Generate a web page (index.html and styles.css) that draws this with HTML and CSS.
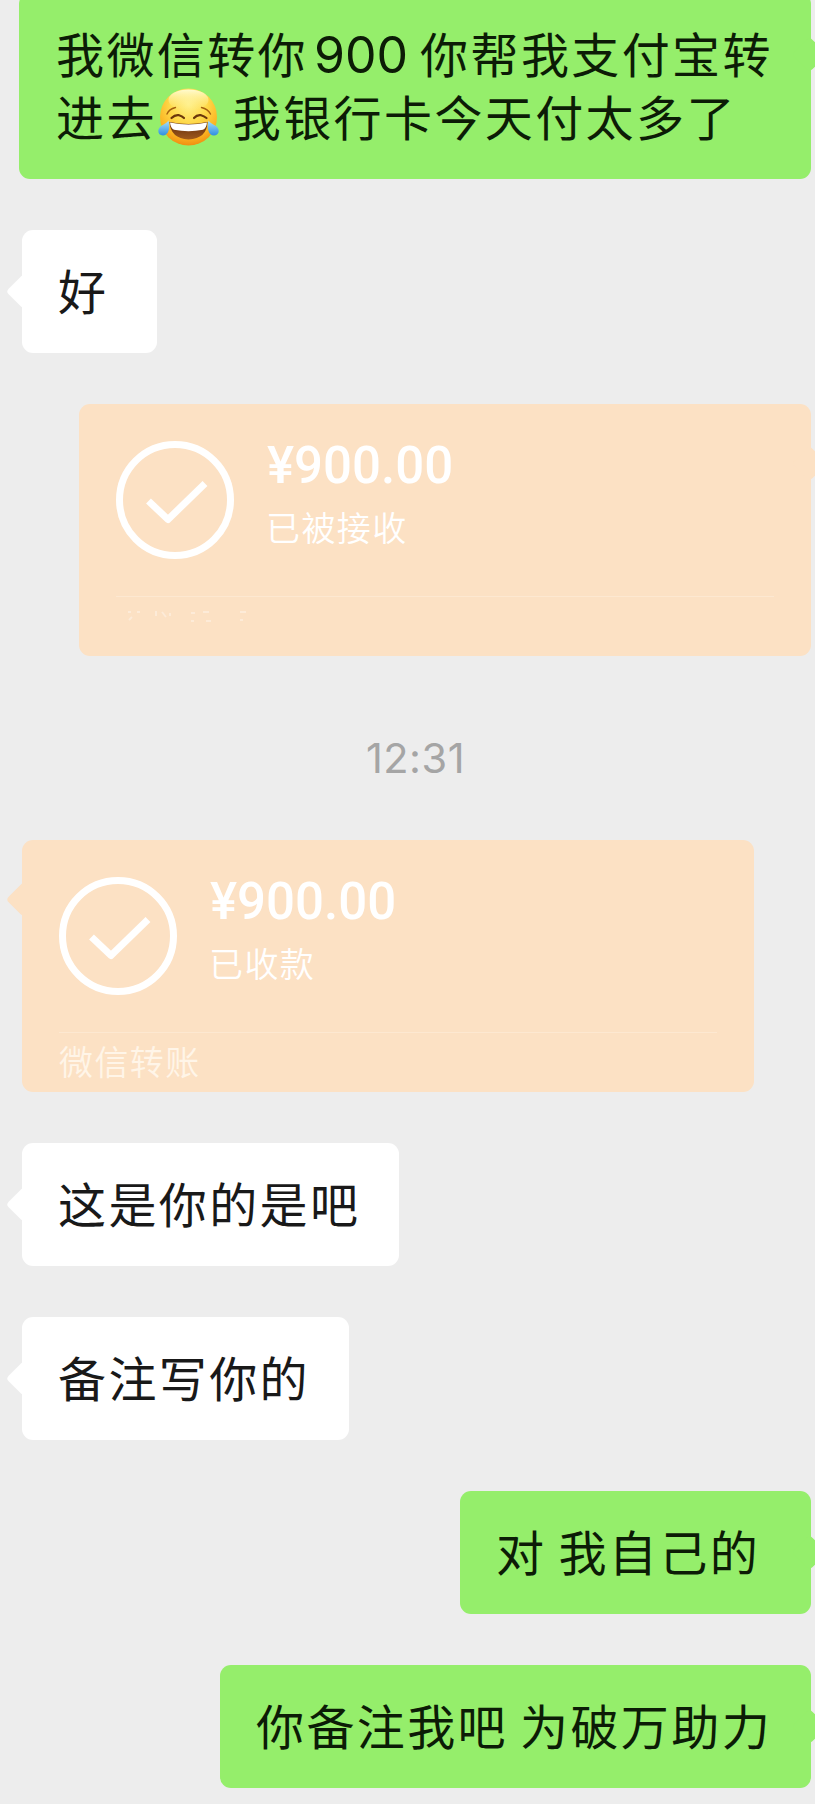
FILE: index.html
```html
<!DOCTYPE html>
<html lang="zh-CN">
<head>
<meta charset="utf-8">
<title>聊天</title>
<link rel="stylesheet" href="styles.css">
</head>
<body>
<main class="chat">
  <div class="bubble sent long">
    <div>我微信转你<span class="num">900</span>你帮我支付宝转</div>
    <div class="line">进去<svg class="emoji" viewBox="0 0 62 58" role="img" aria-label="笑哭">
      <defs>
        <radialGradient id="face" cx="0.5" cy="0.28" r="0.72">
          <stop offset="0" stop-color="#fff08a"/><stop offset="0.45" stop-color="#fed94a"/><stop offset="0.8" stop-color="#fbb321"/><stop offset="1" stop-color="#ef8f12"/>
        </radialGradient>
        <linearGradient id="shine" x1="0" y1="0" x2="0" y2="1">
          <stop offset="0" stop-color="#fffbd0"/><stop offset="1" stop-color="#fff08a" stop-opacity="0"/>
        </linearGradient>
        <linearGradient id="mouth" x1="0" y1="0" x2="0" y2="1">
          <stop offset="0" stop-color="#5e2a0c"/><stop offset="1" stop-color="#a05a1c"/>
        </linearGradient>
        <linearGradient id="tear" x1="0" y1="0" x2="0" y2="1">
          <stop offset="0" stop-color="#a9e0fa"/><stop offset="1" stop-color="#2e8fe0"/>
        </linearGradient>
      </defs>
      <circle cx="30.5" cy="29" r="28.5" fill="url(#face)"/>
      <ellipse cx="30.5" cy="12" rx="20" ry="10.5" fill="url(#shine)"/>
      <g fill="none" stroke="#a4600f" stroke-linecap="round">
        <path stroke-width="1.4" d="M9 26Q11 21 17.500 19.500M43.500 19.500Q50 21 52.500 26"/>
        <path stroke="#6b370b" stroke-width="2.200" d="M13.500 30Q17 26.500 21 27.200Q24 28 26 30M36 30Q39 26.500 43 27.200Q46 28 48.500 30"/>
      </g>
      <path d="M11.500 34Q30.500 38 49.500 34Q49 50.500 30.500 51.500Q12.500 50.500 11.500 34Z" fill="url(#mouth)"/>
      <path d="M12 34.500Q30.500 38.500 49 34.500Q48.500 40 45 41.800Q30.500 44.500 16 41.800Q12.500 40 12 34.500Z" fill="#fff"/>
      <path d="M10.500 32.500C12.500 40 10.500 47.500 5 47.500C0 47.500-1 42 2 39C4 36.800 8 36 10.500 32.500Z" fill="url(#tear)"/>
      <path d="M50.500 32.500C48.500 40 50.500 47.500 56 47.500C61 47.500 62 42 59 39C57 36.800 53 36 50.500 32.500Z" fill="url(#tear)"/>
    </svg>我银行卡今天付太多了</div>
  </div>

  <div class="bubble received short">好</div>

  <section class="card sent">
    <div class="summary">
      <svg class="check" viewBox="0 0 118 118"><circle cx="59" cy="59" r="55.500"/><path d="M32.500 60L52 78.500L89 42.500"/></svg>
      <div class="info"><div class="amount">¥900.00</div><div class="status">已被接收</div></div>
    </div>
    <div class="footer">
      <svg class="trace" viewBox="0 0 130 20"><path d="M3 3h3m6 0h3M4 11l3-3M31 2v5m6-4l4 5m4-4v3M66 4h4m8-1h6M66 12h3m12 0h5M115 3h6m-6 8h3"/></svg>
    </div>
  </section>

  <time class="time">12:31</time>

  <section class="card received">
    <div class="summary">
      <svg class="check" viewBox="0 0 118 118"><circle cx="59" cy="59" r="55.500"/><path d="M32.500 60L52 78.500L89 42.500"/></svg>
      <div class="info"><div class="amount">¥900.00</div><div class="status">已收款</div></div>
    </div>
    <div class="footer">微信转账</div>
  </section>

  <div class="bubble received">这是你的是吧</div>
  <div class="bubble received">备注写你的</div>
  <div class="bubble sent own">对 我自己的</div>
  <div class="bubble sent help">你备注我吧 为破万助力</div>
</main>
</body>
</html>
```
FILE: styles.css
```css
* { box-sizing: border-box; }

html { overflow: hidden; }

body {
  margin: 0;
  background: #ededed;
  font-family: "Noto Sans CJK SC", sans-serif;
}

.chat {
  display: flex;
  flex-direction: column;
  gap: 51px;
  width: 815px;
  height: 1804px;
  padding: 0 4px 0 22px;
  margin-top: -7px;
}

.bubble,
.card {
  position: relative;
  flex: none;
  border-radius: 11px;
}

.bubble {
  padding: 28px 39px 32px 36px;
  font-size: 48px;
  line-height: 63px;
  letter-spacing: 2.4px;
  word-spacing: -1.1px;
  white-space: nowrap;
  color: #191919;
}

.received { align-self: flex-start; background: #fff; }
.sent { align-self: flex-end; background: #95ee6b; color: #0c1c06; }

/* Speech tail */
.bubble::before,
.card::before {
  content: "";
  position: absolute;
  top: 49px;
  width: 25px;
  height: 25px;
  border-radius: 4px;
  background: inherit;
  transform: rotate(45deg);
}
.card::before { top: 47px; }
.received::before { left: -11px; }
.sent::before { right: -11px; }

.long { width: 792px; height: 186px; padding-left: 37px; }
.short { width: 135px; }
.own { width: 351px; }
.help { width: 591px; }

.num {
  margin: 0 12px 0 6px;
  font-family: Inter, sans-serif;
  font-size: 50px;
  letter-spacing: 0;
  line-height: 1;
}

.line { display: flex; }

.emoji {
  flex: none;
  width: 62px;
  height: 58px;
  margin: 4px 13px 0 1px;
}

.card {
  width: 732px;
  height: 252px;
  padding: 37px 37px 0;
}

.card.sent,
.card.received {
  background: #fce1c4;
  color: #fff;
}

.summary { display: flex; gap: 33px; height: 155px; }

.check { flex: none; width: 118px; height: 118px; }
.check circle,
.check path {
  fill: none;
  stroke: #fff;
  stroke-width: 7;
  stroke-linejoin: round;
}

.amount {
  font: 500 51px/50px Roboto, sans-serif;
}

.status {
  margin: 11px 0 0 -1px;
  font-size: 34px;
  font-weight: 350;
  line-height: 50px;
  letter-spacing: 1.4px;
}

.footer {
  height: 60px;
  border-top: 1px solid #fde8d1;
  font-size: 34px;
  font-weight: 350;
  line-height: 56px;
  letter-spacing: 1.4px;
  color: #fff5e8;
}

.trace {
  display: block;
  width: 130px;
  height: 20px;
  margin: 12px 0 0 9px;
  fill: none;
  stroke: #fdebd8;
  stroke-width: 2;
}

.time {
  align-self: center;
  height: 82px;
  padding-left: 0;
  margin-left: -2px;
  font-family: Inter, sans-serif;
  font-size: 41.5px;
  letter-spacing: 0.5px;
  line-height: 102px;
  color: #a5a5a5;
}
```
